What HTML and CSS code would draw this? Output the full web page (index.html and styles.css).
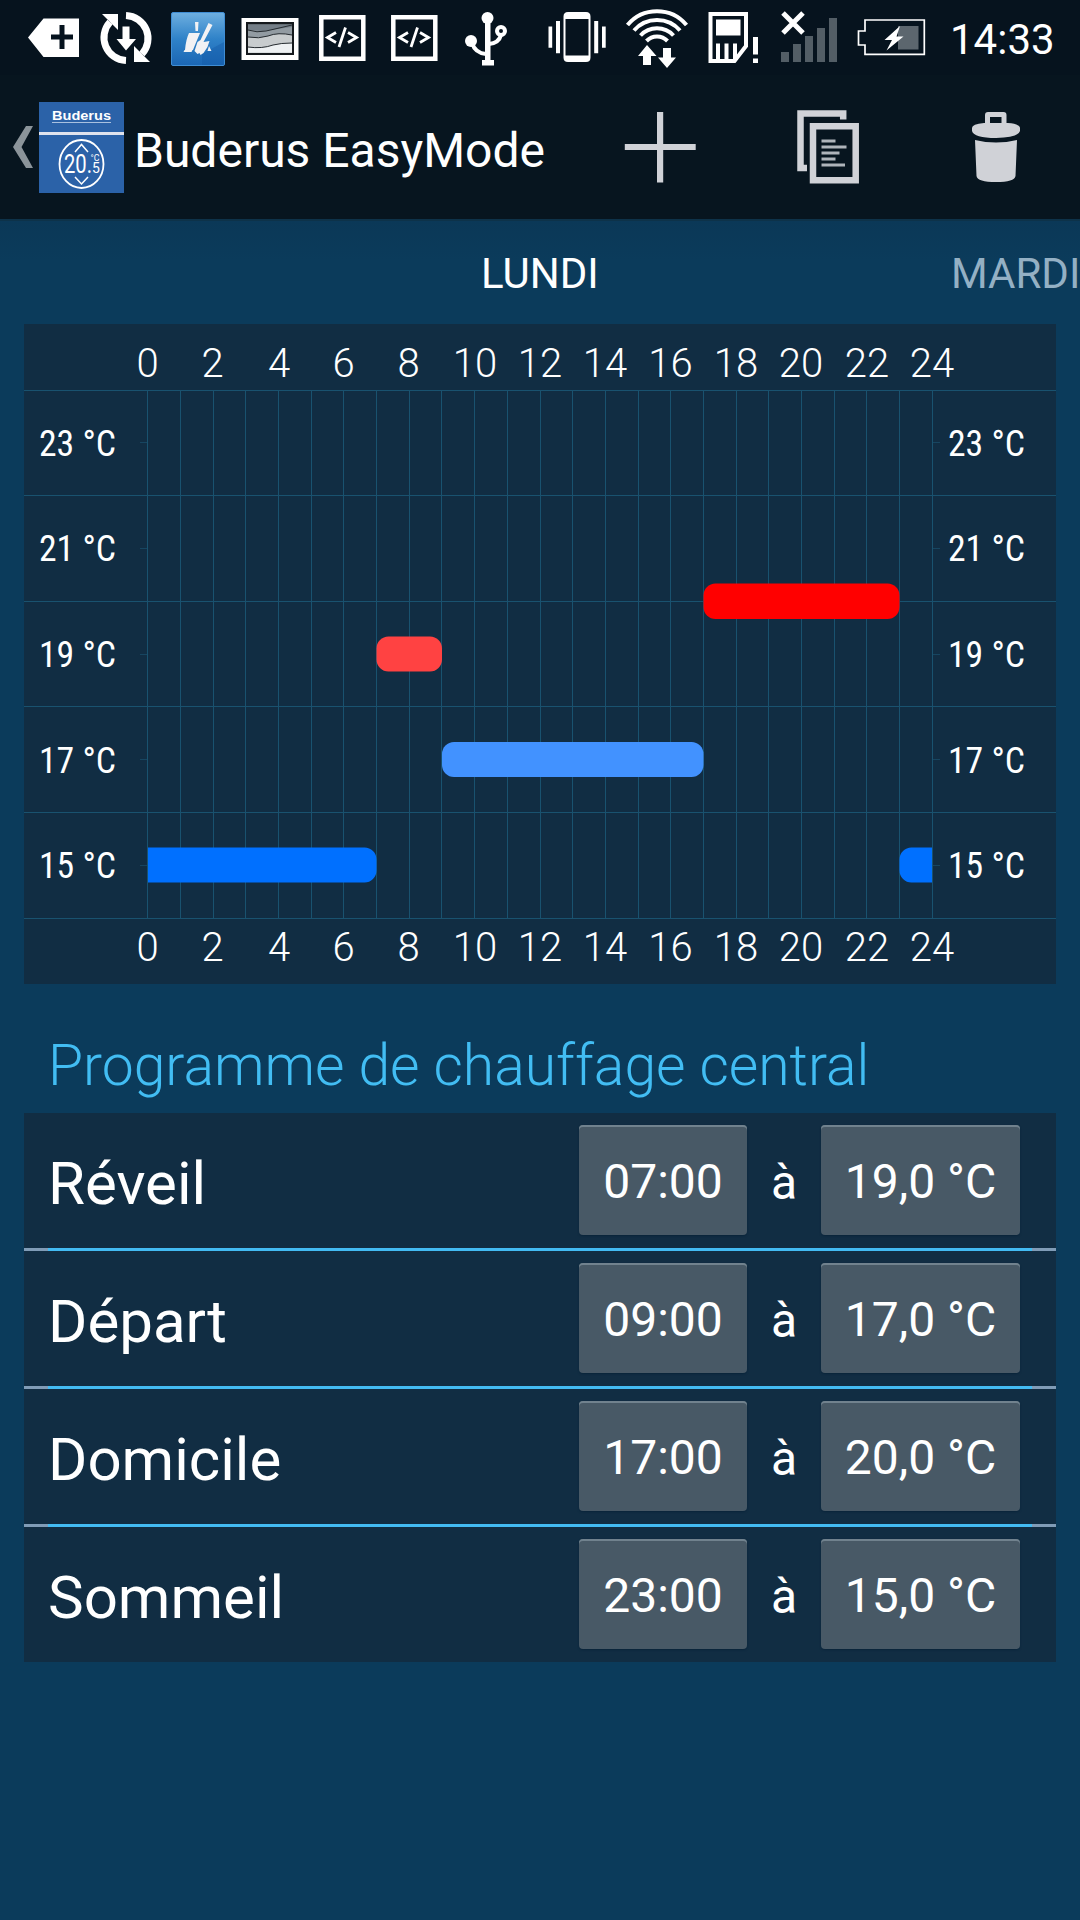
FILE: index.html
```html
<!DOCTYPE html>
<html lang="fr">
<head>
<meta charset="utf-8">
<title>Buderus EasyMode</title>
<link rel="stylesheet" href="styles.css">
</head>
<body>
<div class="status-bar">
  <svg class="cell" viewBox="18 0 72 75"><path fill="#fff" fill-rule="evenodd" d="M28 37.500L43.500 18.500H79V57H43.500ZM59.500 25v9.500H51v5h8.500V49h5v-9.500H73v-5h-8.500V25Z"/></svg>
  <svg class="cell" viewBox="90 0 72 75">
    <g fill="none" stroke="#fff" stroke-width="7"><path d="M126 60.500A23 23 0 0 1 110 22"/><path d="M126 15.500A23 23 0 0 1 142 54"/></g>
    <path fill="#fff" d="M102 14h16v16ZM150 62h-16V46ZM122.500 26.500h7V39h6.500L126 50.500 116.500 39h6Z"/>
  </svg>
  <svg class="cell" viewBox="162 0 72 75">
    <defs><linearGradient id="sky" x1="0" y1="0" x2="0" y2="1"><stop offset="0" stop-color="#6eafe0"/><stop offset=".5" stop-color="#2f82c8"/><stop offset="1" stop-color="#1b66b4"/></linearGradient></defs>
    <rect x="171.500" y="12.500" width="53" height="53" rx="1.500" fill="url(#sky)" stroke="#3f8dd4"/>
    <path fill="#155aa8" opacity=".45" d="M202 54l22-12v23h-22Z"/>
    <path fill="#f2f2f4" d="M195 22h3.500l-.5 9h-2.500ZM208.500 23l4 2-9 17 6-1-2 6-4 6-3 2-1-2-2 1-3-3 3-9 3-2ZM189 33h11l-5 12-2 5h-8Q186 39 189 33ZM184.500 50h8l-1 2h-8ZM209 46l2.500 5h-4Z"/>
  </svg>
  <svg class="cell" viewBox="234 0 72 75">
    <rect x="241.500" y="18" width="57" height="42" fill="#fff"/><rect x="246" y="22" width="48" height="33" fill="#15191d"/>
    <rect x="248" y="24.500" width="44" height="28" fill="#929ba2"/>
    <path fill="#747e87" d="M248 24.500h44V27l-15 2-14 2-15-1Z"/>
    <path fill="#c8ccce" d="M248 37q11 2 20-1 10-4 24-1v18h-44Z"/><path fill="#eef1f3" d="M248 47q14 2 25-2 8-2 19-2v9.500h-44Z"/>
    <path fill="none" stroke="#252b30" d="M248 30q9 3 18 1t26-6M248 37q11 2 20-1 10-4 24-1M248 47q14 2 25-2 8-2 19-2"/>
  </svg>
  <svg class="cell" viewBox="306 0 72 75"><g fill="none" stroke="#fff"><path stroke-width="4.500" d="M321.300 17.200h42v41.500h-42Z"/><path stroke-width="2.800" d="M336 32.500l-8.500 5 8.500 5M348 32.500l8.500 5-8.500 5M345.500 27.500l-6.500 19.500"/></g></svg>
  <svg class="cell" viewBox="378 0 72 75"><g fill="none" stroke="#fff"><path stroke-width="4.500" d="M393.300 17.200h42v41.500h-42Z"/><path stroke-width="2.800" d="M408 32.500l-8.500 5 8.500 5M420 32.500l8.500 5-8.500 5M417.500 27.500l-6.500 19.500"/></g></svg>
  <svg class="cell" viewBox="450 0 72 75"><g fill="#fff"><circle cx="487.500" cy="18" r="6"/><circle cx="471" cy="41" r="6"/><path d="M485 18h5.500v42h3.500v5.500h-12V60h3Z"/></g><g fill="none" stroke="#fff" stroke-width="4"><path d="M472 43q3 10 14 11M489 44q10-1 12-9"/><circle cx="501" cy="31" r="4"/></g></svg>
  <svg class="vibrate" viewBox="546 0 62 75"><path fill="#fff" d="M548.500 26.500h3.700v21.300h-3.700ZM556 21h4v32.300h-4ZM594.200 21h4v32.300h-4ZM602 26.500h3.700v21.300H602Z"/><path fill="#fff" fill-rule="evenodd" d="M568 12h18q4.500 0 4.500 4.500v41q0 4.500-4.500 4.500h-18q-4.500 0-4.500-4.500v-41q0-4.500 4.500-4.500Zm-2.500 7v36.500h23V19Z"/></svg>
  <svg class="wifi" viewBox="624 0 66 75"><g fill="none" stroke="#fff" stroke-width="4"><path d="M627.500 25A38.500 38.500 0 0 1 686.500 25M634 30.500A30.500 30.500 0 0 1 680 30.500M640.500 35.500A22.500 22.500 0 0 1 673.500 35.500M646.500 41A14.500 14.500 0 0 1 667.500 41"/></g><path fill="#fff" d="M647 45l9.500 11H651v9h-8v-9h-5ZM663 48h8v9.500h5L667 68l-9-10.500h5Z"/></svg>
  <svg class="sim" viewBox="706 0 54 75"><path fill="none" stroke="#fff" stroke-width="4" d="M710.500 14h35.500v32L734.500 61h-24Z"/><path fill="#fff" d="M716 19.500h24.500V35.500H716ZM716 43.500h4V60h-4ZM724.500 43.500h4V60h-4ZM733 43.500h4V58l-4 3ZM753 37h5v17.500h-5ZM753 58.500h5V63h-5Z"/></svg>
  <svg class="signal" viewBox="780 0 58 75"><path fill="#535e66" d="M781 52h8v10h-8ZM793 44h8v18h-8ZM805 36h8v26h-8ZM817 28h8v34h-8ZM829 18h8v44h-8Z"/><path fill="none" stroke="#fff" stroke-width="5" d="M783 13l20 20M803 13l-20 20"/></svg>
  <svg class="battery" viewBox="856 0 70 75"><path fill="none" stroke="#fff" stroke-width="1.700" d="M865 20h59.300v34.300H865V45h-6.500V31H865Z"/><path fill="#5c666e" d="M898 26h20.500v23.500H898Z"/><path fill="#fff" d="M900 26l-15.500 14h7.500l-5.500 10.500 17-14h-7Z"/></svg>
  <span class="clock">14:33</span>
</div>
<header class="action-bar">
  <svg class="back" viewBox="12 0 22 144"><path fill="#8b949a" d="M26 51h7L21.500 72 33 93h-7L13 72Z"/></svg>
  <svg class="logo" viewBox="0 0 85 91">
    <rect width="85" height="91" fill="#2b62a8"/><rect y="30" width="85" height="3" fill="#dfe3ee"/>
    <text class="brand" x="13" y="18" textLength="59" lengthAdjust="spacingAndGlyphs">Buderus</text><path stroke="#a9c1e0" d="M13 20.500h59"/>
    <ellipse cx="42.500" cy="62" rx="22" ry="24" fill="none" stroke="#fff" stroke-width="1.800"/>
    <path fill="none" stroke="#fff" stroke-width="1.500" d="M36 50l6.500-7.500L49 50M36 75l6.500 7L49 75"/>
    <text class="temp" x="25" y="71" textLength="28" lengthAdjust="spacingAndGlyphs">20.</text><text class="tiny" x="51.500" y="59" textLength="9" lengthAdjust="spacingAndGlyphs">°C</text><text class="half" x="53" y="71">5</text>
  </svg>
  <h1>Buderus EasyMode</h1>
  <svg class="action" viewBox="588 0 144 144"><path fill="#d0d2d7" d="M657 37h6.200v32h32.500v6h-32.500v32.500H657V75h-32.200v-6H657Z"/></svg>
  <svg class="action" viewBox="756 0 144 144"><g fill="none" stroke="#d0d2d7" stroke-width="6.500"><path d="M843.200 44.500v-6H800.500v54.500h6.500"/><path d="M813 51.200h42.700v54H813Z"/></g><path stroke="#aeb4ba" stroke-width="2.800" d="M821.500 66h14M821.500 72h25M821.500 78h18M821.500 84h14M821.500 90h23.500"/></svg>
  <svg class="action" viewBox="924 0 144 144"><g fill="#d0d2d7"><path fill-rule="evenodd" d="M985 50V40q0-3 3-3h15.500q3 0 3 3v10Zm5-1h11.500v-7H990Z"/><path d="M972 53q0-4 12-5h24q12 1 12 5v3q-2 7-24 7t-24-7ZM975 65q21 5 42 0l-1.500 36q-1 6-19.500 6t-19.500-6Z"/></g></svg>
</header>
<nav class="days"><span class="today">LUNDI</span><span class="next">MARDI</span></nav>
<main>
  <svg class="chart" viewBox="24 324 1032 660">
    <path class="grid" d="M24 390.500H1056M24 495.500H1056M24 601.500H1056M24 706.500H1056M24 812.500H1056M24 918.500H1056"/>
    <path class="grid" d="M147.500 391V918M180.500 391V918M213.500 391V918M245.500 391V918M278.500 391V918M311.500 391V918M343.500 391V918M376.500 391V918M409.500 391V918M441.500 391V918M474.500 391V918M507.500 391V918M540.500 391V918M572.500 391V918M605.500 391V918M638.500 391V918M670.500 391V918M703.500 391V918M736.500 391V918M768.500 391V918M801.500 391V918M834.500 391V918M866.500 391V918M899.500 391V918M932.500 391V918"/>
    <path class="grid tick" d="M140 442.500h7M140 548.500h7M140 654.500h7M140 759.500h7M140 865.500h7M933 442.500h7M933 548.500h7M933 654.500h7M933 759.500h7M933 865.500h7"/>
    <path fill="#0070ff" d="M148 847.500H364.500a12 12 0 0 1 12 12v11a12 12 0 0 1-12 12H148ZM932 847.500H911.500a12 12 0 0 0-12 12v11a12 12 0 0 0 12 12H932Z"/>
    <rect x="376.500" y="636.500" width="65.500" height="35" rx="12" fill="#ff4242"/>
    <rect x="442" y="742" width="261.500" height="35" rx="12" fill="#4292ff"/>
    <rect x="703.500" y="583.500" width="196" height="35.500" rx="12" fill="#f00"/>
    <g class="hours"><text x="147.500" y="376.500">0</text><text x="212.500" y="376.500">2</text><text x="279" y="376.500">4</text><text x="343.500" y="376.500">6</text><text x="408.500" y="376.500">8</text><text x="475" y="376.500">10</text><text x="540" y="376.500">12</text><text x="605" y="376.500">14</text><text x="670.500" y="376.500">16</text><text x="736" y="376.500">18</text><text x="801" y="376.500">20</text><text x="867" y="376.500">22</text><text x="932" y="376.500">24</text></g>
    <g class="hours"><text x="147.500" y="960.500">0</text><text x="212.500" y="960.500">2</text><text x="279" y="960.500">4</text><text x="343.500" y="960.500">6</text><text x="408.500" y="960.500">8</text><text x="475" y="960.500">10</text><text x="540" y="960.500">12</text><text x="605" y="960.500">14</text><text x="670.500" y="960.500">16</text><text x="736" y="960.500">18</text><text x="801" y="960.500">20</text><text x="867" y="960.500">22</text><text x="932" y="960.500">24</text></g>
    <g class="temps"><text x="39" y="456" textLength="77" lengthAdjust="spacingAndGlyphs">23 °C</text><text x="39" y="561" textLength="77" lengthAdjust="spacingAndGlyphs">21 °C</text><text x="39" y="667" textLength="77" lengthAdjust="spacingAndGlyphs">19 °C</text><text x="39" y="773" textLength="77" lengthAdjust="spacingAndGlyphs">17 °C</text><text x="39" y="878" textLength="77" lengthAdjust="spacingAndGlyphs">15 °C</text>
    <text x="948" y="456" textLength="77" lengthAdjust="spacingAndGlyphs">23 °C</text><text x="948" y="561" textLength="77" lengthAdjust="spacingAndGlyphs">21 °C</text><text x="948" y="667" textLength="77" lengthAdjust="spacingAndGlyphs">19 °C</text><text x="948" y="773" textLength="77" lengthAdjust="spacingAndGlyphs">17 °C</text><text x="948" y="878" textLength="77" lengthAdjust="spacingAndGlyphs">15 °C</text></g>
  </svg>
  <h2>Programme de chauffage central</h2>
  <div class="program">
    <div class="row"><span class="name">Réveil</span><button class="time">07:00</button><span class="at">à</span><button class="degrees">19,0 °C</button></div>
    <div class="divider"></div>
    <div class="row"><span class="name">Départ</span><button class="time">09:00</button><span class="at">à</span><button class="degrees">17,0 °C</button></div>
    <div class="divider"></div>
    <div class="row"><span class="name">Domicile</span><button class="time">17:00</button><span class="at">à</span><button class="degrees">20,0 °C</button></div>
    <div class="divider"></div>
    <div class="row"><span class="name">Sommeil</span><button class="time">23:00</button><span class="at">à</span><button class="degrees">15,0 °C</button></div>
  </div>
</main>
</body>
</html>
```
FILE: styles.css
```css
* { box-sizing: border-box; }
body { margin: 0; width: 1080px; height: 1920px; overflow: hidden; background: #0b3b5b; color: #fff; font-family: Roboto, sans-serif; }
svg { display: block; flex: none; }

.status-bar { display: flex; height: 75px; padding-left: 18px; background: #06131e; }
.status-bar svg { height: 75px; }
.cell { width: 72px; }
.vibrate { width: 62px; margin-left: 24px; }
.wifi { width: 66px; margin-left: 16px; }
.sim { width: 54px; margin-left: 16px; }
.signal { width: 58px; margin-left: 20px; }
.battery { width: 70px; margin-left: 18px; }
.clock { margin-left: 24px; font-size: 42px; line-height: 79px; }

.action-bar { display: flex; height: 144px; padding-left: 12px; background: #07151f; }
.back { width: 22px; height: 144px; }
.logo { width: 85px; height: 91px; margin: 27px 0 0 5px; }
.brand { font: bold 12px "Liberation Sans", sans-serif; fill: #fff; }
.temp { font: 25px Roboto, sans-serif; fill: #fff; }
.tiny { font: 9px Roboto, sans-serif; fill: #fff; }
.half { font: 14px Roboto, sans-serif; fill: #fff; }
h1 { width: 454px; margin: 0 0 0 10px; font-size: 48px; font-weight: 400; line-height: 151px; white-space: nowrap; }
.action { width: 144px; height: 144px; }
.action + .action { margin-left: 24px; }

.days { display: flex; height: 105px; padding-left: 481px; border-top: 2px solid #0d3249; background: linear-gradient(#0b3857, #0b3b5b 40px); font-size: 42px; line-height: 105px; overflow: hidden; }
.today { width: 470px; flex: none; }
.next { color: #94b0c4; }

main { padding: 0 24px; }
.chart { width: 1032px; height: 660px; background: #112d43; }
.grid { fill: none; stroke: #19526f; stroke-width: 1; }
.tick { stroke: #174560; }
.hours { font-size: 40px; font-weight: 300; fill: #fff; text-anchor: middle; }
.temps { font-size: 36px; font-stretch: condensed; fill: #fff; }

h2 { height: 129px; margin: 0; padding-left: 24px; font-size: 57px; font-weight: 300; line-height: 164px; color: #42bdf3; white-space: nowrap; }
.program { background: #112d43; }
.row { display: flex; align-items: flex-start; height: 135px; padding-left: 24px; }
.name { width: 531px; font-size: 60px; line-height: 141px; }
button { height: 110px; margin: 12px 0 0; padding: 1px 0 0; border: 0; border-radius: 4px; background: #485966; box-shadow: inset 0 2px #71828e, 0 1px 2px #09243a; color: #fff; font: 48px/112px Roboto, sans-serif; white-space: nowrap; }
.time { width: 168px; }
.degrees { width: 199px; }
.at { width: 74px; text-align: center; font-size: 48px; line-height: 140px; }
.divider { height: 3px; background: linear-gradient(90deg, #809cb7 24px, #43bbf3 24px 1008px, #809cb7 1008px); }
```
